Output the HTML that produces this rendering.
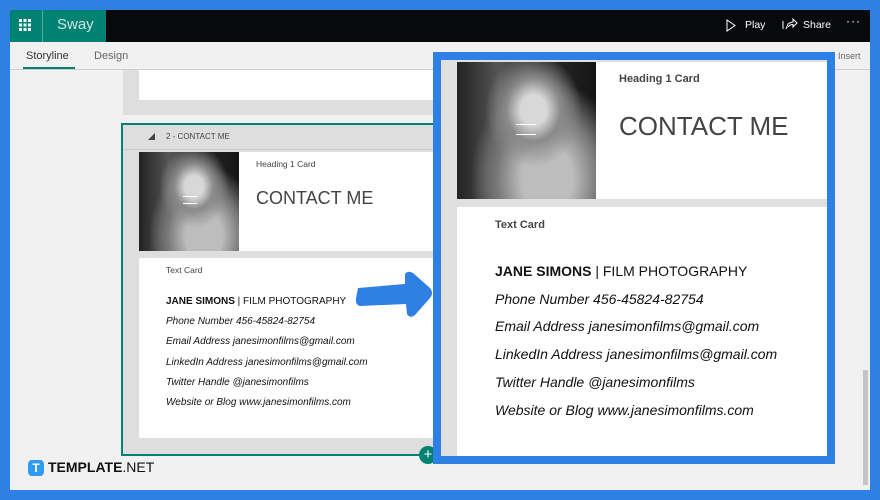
<!DOCTYPE html>
<html><head><meta charset="utf-8"><style>
*{margin:0;padding:0;box-sizing:border-box}
body{width:880px;height:500px;background:#2f80e4;position:relative;overflow:hidden;font-family:"Liberation Sans",sans-serif}
.a{position:absolute}
.photo{background:radial-gradient(ellipse at 55% 35%,#d8d8d8 0 12%,#8a8a8a 25%,transparent 45%),radial-gradient(ellipse at 65% 85%,#bdbdbd 0 20%,#777 40%,transparent 60%),linear-gradient(90deg,#222 0,#555 30%,#2a2a2a 60%,#151515 100%);overflow:hidden}
.lbl{color:#444;font-weight:bold}
</style></head><body>
<div class="a" style="left:10px;top:10px;width:860px;height:480px;background:#f1f1f1"></div>
<div class="a" style="left:10px;top:10px;width:860px;height:32px;background:#08090b"></div>
<div class="a" style="left:10px;top:10px;width:32px;height:32px;background:#008272"></div>
<div class="a" style="left:42px;top:10px;width:64px;height:32px;background:#008272;border-left:1px solid #5aa89c"></div>
<svg class="a" style="left:19px;top:19px" width="12" height="12"><g fill="#fff"><rect x="0" y="0" width="3" height="3"/><rect x="4.5" y="0" width="3" height="3"/><rect x="9" y="0" width="3" height="3"/><rect x="0" y="4.5" width="3" height="3"/><rect x="4.5" y="4.5" width="3" height="3"/><rect x="9" y="4.5" width="3" height="3"/><rect x="0" y="9" width="3" height="3"/><rect x="4.5" y="9" width="3" height="3"/><rect x="9" y="9" width="3" height="3"/></g></svg>
<div class="a" style="left:57px;top:16px;color:#cfe6e2;font-size:15px">Sway</div>
<svg class="a" style="left:726px;top:19px" width="10" height="13"><path d="M1 1 L9 6.5 L1 12 Z" fill="none" stroke="#fff" stroke-width="1"/></svg>
<div class="a" style="left:745px;top:19px;color:#fff;font-size:10.5px">Play</div>
<svg class="a" style="left:782px;top:18px" width="16" height="13"><path d="M1 3v8M4 11 L6 6 Q9 4 11 4 V1 L15 5 L11 9 V6.5 Q8 6.5 6 9" fill="none" stroke="#fff" stroke-width="1"/></svg>
<div class="a" style="left:803px;top:19px;color:#fff;font-size:10.5px">Share</div>
<div class="a" style="left:846px;top:14px;color:#fff;font-size:12px;letter-spacing:1px">···</div>
<div class="a" style="left:10px;top:69px;width:860px;height:1px;background:#d0d0d0"></div>
<div class="a" style="left:26px;top:50px;color:#333;font-size:11px">Storyline</div>
<div class="a" style="left:23px;top:67px;width:52px;height:2px;background:#008272"></div>
<div class="a" style="left:94px;top:50px;color:#666;font-size:11px">Design</div>
<div class="a" style="left:838px;top:51px;color:#666;font-size:9px">Insert</div>
<div class="a" style="left:863px;top:370px;width:5px;height:115px;background:#c4c4c4"></div>
<div class="a" style="left:123px;top:70px;width:320px;height:45px;background:#dedede"></div>
<div class="a" style="left:139px;top:70px;width:300px;height:30px;background:#fff"></div>
<div class="a" style="left:121px;top:123px;width:320px;height:333px;border:2px solid #008272;background:#dedede"></div>
<div class="a" style="left:123px;top:125px;width:316px;height:25px;background:#dedede;border-bottom:1px solid #ccc"></div>
<svg class="a" style="left:148px;top:133px" width="7" height="7"><path d="M7 0V7H0Z" fill="#444"/></svg>
<div class="a" style="left:166px;top:132px;color:#444;font-size:8px">2 - CONTACT ME</div>
<div class="a photo" style="left:139px;top:152px;width:100px;height:99px"></div>
<div class="a" style="left:239px;top:152px;width:200px;height:99px;background:#fff"></div>
<div class="a" style="left:183px;top:196px;width:14px;height:8px;border-top:1px solid #fff;border-bottom:1px solid #fff"></div>
<div class="a" style="left:256px;top:159px;color:#444;font-size:8.5px">Heading 1 Card</div>
<div class="a" style="left:256px;top:188px;color:#444;font-size:18px">CONTACT ME</div>
<div class="a" style="left:139px;top:258px;width:300px;height:180px;background:#fff"></div>
<div class="a" style="left:166px;top:265px;color:#444;font-size:8.5px">Text Card</div>
<div class="a" style="left:166px;top:292px;color:#111;font-size:10px;line-height:20.2px"><b>JANE SIMONS</b> | FILM PHOTOGRAPHY<i style="display:block">Phone Number 456-45824-82754</i><i style="display:block">Email Address janesimonfilms@gmail.com</i><i style="display:block">LinkedIn Address janesimonfilms@gmail.com</i><i style="display:block">Twitter Handle @janesimonfilms</i><i style="display:block">Website or Blog www.janesimonfilms.com</i></div>
<div class="a" style="left:419px;top:446px;width:18px;height:18px;border-radius:50%;background:#008272;color:#fff;font-size:15px;line-height:17px;text-align:center">+</div>
<svg class="a" style="left:350px;top:268px" width="90" height="54"><path d="M8 20 L55 16 L55 6 Q58 2 63 5 L80 20 Q84 25 80 30 L65 47 Q60 51 57 46 L56 36 L10 38 Q5 37 6 30 Z" fill="#2f80e4"/></svg>
<div class="a" style="left:433px;top:52px;width:402px;height:412px;background:#2f80e4"></div>
<div class="a" style="left:441px;top:60px;width:386px;height:396px;background:#e0e0e0"></div>
<div class="a photo" style="left:457px;top:62px;width:139px;height:137px"></div>
<div class="a" style="left:516px;top:124px;width:20px;height:11px;border-top:1px solid #fff;border-bottom:1px solid #fff"></div>
<div class="a" style="left:596px;top:62px;width:231px;height:137px;background:#fff"></div>
<div class="a lbl" style="left:619px;top:73px;font-size:11px">Heading 1 Card</div>
<div class="a" style="left:619px;top:111px;color:#444;font-size:26px">CONTACT ME</div>
<div class="a" style="left:457px;top:207px;width:370px;height:249px;background:#fff"></div>
<div class="a lbl" style="left:495px;top:219px;font-size:11px">Text Card</div>
<div class="a" style="left:495px;top:258px;color:#111;font-size:14px;line-height:27.7px"><div><b>JANE SIMONS</b> | FILM PHOTOGRAPHY</div><i style="display:block">Phone Number 456-45824-82754</i><i style="display:block">Email Address janesimonfilms@gmail.com</i><i style="display:block">LinkedIn Address janesimonfilms@gmail.com</i><i style="display:block">Twitter Handle @janesimonfilms</i><i style="display:block">Website or Blog www.janesimonfilms.com</i></div>
<div class="a" style="left:28px;top:460px;width:16px;height:16px;border-radius:4px;background:#2f9bf0;color:#fff;font-weight:bold;font-size:12px;line-height:16px;text-align:center">T</div>
<div class="a" style="left:48px;top:459px;color:#111;font-size:14px"><b>TEMPLATE</b>.NET</div>
</body></html>
